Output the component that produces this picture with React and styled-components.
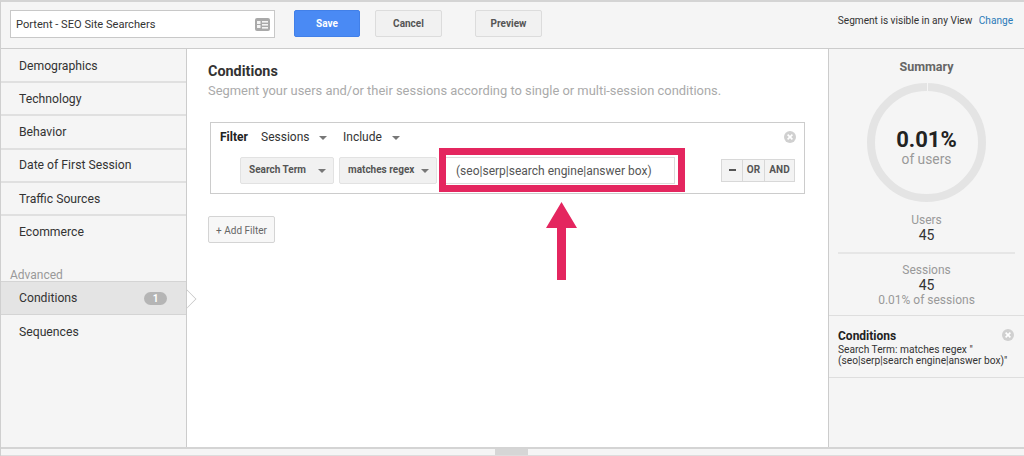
import React from "react";
import styled, { createGlobalStyle } from "styled-components";

const menuItems = ["Demographics", "Technology", "Behavior", "Date of First Session", "Traffic Sources", "Ecommerce"];

function Caret() {
  return <CaretMark />;
}

function CloseIcon() {
  return (
    <svg width="14" height="14" viewBox="0 0 14 14">
      <circle cx="7" cy="7" r="6" fill="#d0d0d0" />
      <path d="M4.6 4.6l4.8 4.8M9.4 4.6l-4.8 4.8" stroke="#fff" strokeWidth="1.6" />
    </svg>
  );
}

function CardIcon() {
  return (
    <svg width="15" height="13" viewBox="0 0 15 13">
      <rect x="0" y="0" width="15" height="13" rx="2" fill="#a9a9a9" />
      <rect x="2" y="3" width="3.5" height="3" fill="#f4f4f4" />
      <rect x="2" y="7" width="3.5" height="3" fill="#f4f4f4" />
      <rect x="7" y="3" width="6" height="1.6" fill="#f4f4f4" />
      <rect x="7" y="6" width="6" height="1.6" fill="#f4f4f4" />
      <rect x="7" y="9" width="6" height="1.6" fill="#f4f4f4" />
    </svg>
  );
}

export default function App() {
  return (
    <>
      <GlobalStyle />
      <Page>
        <TopBar>
          <NameField>
            Portent - SEO Site Searchers
            <CardIcon />
          </NameField>
          <SaveButton>Save</SaveButton>
          <ToolButton>Cancel</ToolButton>
          <ToolButton $gap={33}>Preview</ToolButton>
          <Visibility>
            Segment is visible in any View <ChangeLink>Change</ChangeLink>
          </Visibility>
        </TopBar>
        <Body>
          <Sidebar>
            {menuItems.map((item) => (
              <MenuItem key={item}>{item}</MenuItem>
            ))}
            <AdvancedLabel>Advanced</AdvancedLabel>
            <ActiveItem>
              Conditions
              <Count>1</Count>
            </ActiveItem>
            <PlainItem>Sequences</PlainItem>
          </Sidebar>
          <Main>
            <Title>Conditions</Title>
            <Subtitle>Segment your users and/or their sessions according to single or multi-session conditions.</Subtitle>
            <FilterBox>
              <FilterHead>
                <FilterLabel>Filter</FilterLabel>
                <HeadSelect $width={82}>
                  Sessions
                  <Caret />
                </HeadSelect>
                <HeadSelect>
                  Include
                  <Caret />
                </HeadSelect>
                <RemoveFilter>
                  <CloseIcon />
                </RemoveFilter>
              </FilterHead>
              <FilterRow>
                <FieldSelect $width={94}>
                  Search Term
                  <Caret />
                </FieldSelect>
                <FieldSelect $width={98}>
                  matches regex
                  <Caret />
                </FieldSelect>
                <ValueInput>(seo|serp|search engine|answer box)</ValueInput>
                <ButtonGroup>
                  <GroupButton $width={22}>
                    <MinusMark />
                  </GroupButton>
                  <GroupButton $width={22}>OR</GroupButton>
                  <GroupButton $width={30}>AND</GroupButton>
                </ButtonGroup>
              </FilterRow>
              <Highlight />
            </FilterBox>
            <AddFilter>+ Add Filter</AddFilter>
            <Arrow width="31" height="78" viewBox="0 0 31 78">
              <path d="M15.5 0L31 26H20V78H11V26H0z" fill="#e4265f" />
            </Arrow>
          </Main>
          <Summary>
            <SummaryTitle>Summary</SummaryTitle>
            <Ring>
              <RingValue>0.01%</RingValue>
              <RingLabel>of users</RingLabel>
              <RingTick />
            </Ring>
            <Stat $pad={11}>
              <StatLabel>Users</StatLabel>
              <StatValue>45</StatValue>
            </Stat>
            <StatDivider />
            <Stat $pad={9}>
              <StatLabel>Sessions</StatLabel>
              <StatValue>45</StatValue>
              <StatLabel>0.01% of sessions</StatLabel>
            </Stat>
            <ConditionCard>
              <ConditionClose>
                <CloseIcon />
              </ConditionClose>
              <ConditionTitle>Conditions</ConditionTitle>
              <ConditionText>
                Search Term: matches regex "
                <br />
                (seo|serp|search engine|answer box)"
              </ConditionText>
            </ConditionCard>
          </Summary>
        </Body>
        <BottomBar>
          <Handle />
        </BottomBar>
      </Page>
    </>
  );
}

const GlobalStyle = createGlobalStyle`
  html, body {
    margin: 0;
    padding: 0;
    background: #fff;
  }
  * {
    box-sizing: border-box;
  }
`;

const Page = styled.div`
  width: 1024px;
  height: 456px;
  overflow: hidden;
  display: flex;
  flex-direction: column;
  font-family: Roboto, "Liberation Sans", sans-serif;
  color: #333;
  border-left: 1px solid #cfcfcf;
  border-top: 2px solid #d4d4d4;
`;

const TopBar = styled.div`
  height: 47px;
  flex: none;
  display: flex;
  align-items: flex-start;
  padding: 8px 0 0 9px;
  background: #f5f5f5;
  border-bottom: 1px solid #cccccc;
`;

const NameField = styled.div`
  width: 265px;
  height: 28px;
  display: flex;
  align-items: center;
  justify-content: space-between;
  padding: 1px 4px 0 5px;
  font-size: 11.1px;
  color: #333;
  background: #fff;
  border: 1px solid #c8c8c8;
`;

const ToolButton = styled.div`
  width: 67px;
  height: 27px;
  margin-left: ${({ $gap }) => $gap || 14}px;
  display: flex;
  align-items: center;
  justify-content: center;
  font-size: 10px;
  font-weight: 700;
  color: #555;
  background: #f1f1f1;
  border: 1px solid #dcdcdc;
  border-radius: 2px;
`;

const SaveButton = styled(ToolButton)`
  width: 66px;
  margin-left: 19px;
  margin-right: 1px;
  color: #fff;
  background: #4a8af4;
  border-color: #4280e8;
`;

const Visibility = styled.div`
  margin-left: auto;
  padding: 5px 11px 0 0;
  font-size: 10.1px;
  color: #333;
`;

const ChangeLink = styled.span`
  margin-left: 4px;
  color: #2a7ab8;
`;

const Body = styled.div`
  flex: 1;
  min-height: 0;
  display: flex;
`;

const Sidebar = styled.div`
  width: 186px;
  flex: none;
  background: #f5f5f5;
  border-right: 1px solid #cccccc;
`;

const MenuItem = styled.div`
  height: 33.3px;
  display: flex;
  align-items: center;
  padding-left: 18px;
  font-size: 12.2px;
  color: #333;
  border-bottom: 2px solid #e0e0e0;
  &:nth-child(1) {
    height: 34px;
    padding-top: 1px;
  }
  &:nth-child(6) {
    padding-bottom: 2px;
    border-bottom: none;
  }
`;

const AdvancedLabel = styled.div`
  margin-top: 18px;
  height: 14px;
  padding-left: 9px;
  font-size: 12px;
  line-height: 16px;
  color: #999;
`;

const ActiveItem = styled.div`
  position: relative;
  z-index: 2;
  height: 34px;
  display: flex;
  align-items: center;
  justify-content: space-between;
  padding: 0 19px 0 18px;
  font-size: 12.2px;
  color: #333;
  background: #e4e4e4;
  border-top: 1px solid #d4d4d4;
  border-bottom: 1px solid #d4d4d4;
  &::after {
    content: "";
    position: absolute;
    top: 9.5px;
    right: -7.5px;
    width: 13px;
    height: 13px;
    background: #fff;
    border-top: 1px solid #cccccc;
    border-right: 1px solid #cccccc;
    clip-path: polygon(0 0, 100% 0, 100% 100%);
    transform: rotate(45deg);
  }
`;

const Count = styled.span`
  width: 23px;
  height: 13px;
  display: flex;
  align-items: center;
  justify-content: center;
  font-size: 10px;
  font-weight: 700;
  color: #fff;
  background: #b5b5b5;
  border-radius: 7px;
`;

const PlainItem = styled(MenuItem)`
  height: 33px;
  border-bottom: none;
`;

const Main = styled.div`
  position: relative;
  flex: 1;
  padding: 14px 0 0 21px;
  background: #fff;
`;

const Title = styled.div`
  font-size: 14.4px;
  font-weight: 700;
  line-height: 17px;
  color: #333;
`;

const Subtitle = styled.div`
  margin-top: 3px;
  font-size: 12.92px;
  line-height: 16px;
  color: #aaa;
  white-space: nowrap;
`;

const FilterBox = styled.div`
  position: relative;
  width: 595px;
  height: 72px;
  margin: 23px 0 0 2px;
  padding: 0 0 0 9px;
  border: 1px solid #cccccc;
`;

const FilterHead = styled.div`
  height: 28px;
  display: flex;
  align-items: center;
`;

const FilterLabel = styled.span`
  width: 41px;
  font-size: 12px;
  font-weight: 700;
  color: #222;
`;

const HeadSelect = styled.span`
  width: ${({ $width }) => ($width ? `${$width}px` : "auto")};
  display: flex;
  align-items: center;
  gap: 10px;
  font-size: 12px;
  color: #333;
`;

const CaretMark = styled.i`
  width: 0;
  height: 0;
  margin-top: 2px;
  border-left: 4px solid transparent;
  border-right: 4px solid transparent;
  border-top: 4px solid #777;
`;

const RemoveFilter = styled.span`
  display: flex;
  margin-left: auto;
  margin-right: 7px;
`;

const FilterRow = styled.div`
  display: flex;
  align-items: center;
  margin-top: 6px;
  padding-left: 20px;
`;

const FieldSelect = styled.div`
  width: ${({ $width }) => $width}px;
  height: 27px;
  margin-right: 5px;
  flex: none;
  display: flex;
  align-items: center;
  justify-content: space-between;
  padding: 0 7px 2px 8px;
  font-size: 10px;
  font-weight: 700;
  color: #555;
  background: #f1f1f1;
  border: 1px solid #e2e2e2;
  border-radius: 2px;
`;

const ValueInput = styled.div`
  width: 230px;
  height: 27px;
  margin-left: 3px;
  flex: none;
  display: flex;
  align-items: center;
  padding-left: 10px;
  font-size: 12px;
  color: #555;
  background: #fff;
  border: 1px solid #dcdcdc;
`;

const ButtonGroup = styled.div`
  display: flex;
  margin-left: 46px;
`;

const GroupButton = styled.div`
  width: ${({ $width }) => $width}px;
  height: 23px;
  display: flex;
  align-items: center;
  justify-content: center;
  padding-bottom: 2px;
  font-size: 10px;
  font-weight: 700;
  color: #555;
  background: #f3f3f3;
  border: 1px solid #d8d8d8;
  border-left-width: 0;
  &:first-child {
    border-left-width: 1px;
  }
`;

const MinusMark = styled.i`
  width: 7px;
  height: 2px;
  background: #555;
`;

const Highlight = styled.div`
  position: absolute;
  left: 228px;
  top: 25px;
  width: 246px;
  height: 44px;
  border: 7px solid #e4265f;
  pointer-events: none;
`;

const AddFilter = styled.div`
  width: 67px;
  height: 27px;
  margin-top: 22px;
  padding-top: 1px;
  display: flex;
  align-items: center;
  justify-content: center;
  font-size: 10px;
  color: #666;
  background: #f7f7f7;
  border: 1px solid #d4d4d4;
  border-radius: 2px;
`;

const Arrow = styled.svg`
  position: absolute;
  left: 359px;
  top: 153px;
`;

const Summary = styled.div`
  width: 196px;
  flex: none;
  background: #f5f5f5;
  border-left: 1px solid #cccccc;
  text-align: center;
`;

const SummaryTitle = styled.div`
  padding-top: 10px;
  font-size: 12.5px;
  font-weight: 700;
  line-height: 15px;
  color: #666;
`;

const Ring = styled.div`
  position: relative;
  width: 119px;
  height: 119px;
  margin: 9px auto 0;
  padding-top: 9px;
  display: flex;
  flex-direction: column;
  align-items: center;
  justify-content: center;
  border: 8px solid #e4e4e4;
  border-radius: 50%;
`;

const RingTick = styled.i`
  position: absolute;
  top: -8px;
  left: 50%;
  width: 1px;
  height: 8px;
  background: #f5f5f5;
`;

const RingValue = styled.div`
  font-size: 22px;
  font-weight: 700;
  line-height: 24px;
  color: #222;
`;

const RingLabel = styled.div`
  font-size: 13.8px;
  line-height: 15px;
  color: #999;
`;

const Stat = styled.div`
  padding-top: ${({ $pad }) => $pad}px;
`;

const StatLabel = styled.div`
  font-size: 12px;
  line-height: 15px;
  color: #999;
`;

const StatValue = styled.div`
  font-size: 14px;
  line-height: 15px;
  color: #333;
`;

const StatDivider = styled.div`
  height: 2px;
  margin: 9px 9px 0 9px;
  background: #e6e6e6;
`;

const ConditionCard = styled.div`
  position: relative;
  height: 63px;
  margin-top: 7px;
  padding: 14px 0 0 9px;
  text-align: left;
  border-top: 1px solid #dedede;
  border-bottom: 1px solid #dedede;
`;

const ConditionClose = styled.span`
  position: absolute;
  top: 12px;
  right: 9px;
  display: flex;
`;

const ConditionTitle = styled.div`
  font-size: 12px;
  font-weight: 700;
  line-height: 13px;
  color: #222;
`;

const ConditionText = styled.div`
  margin-top: 1px;
  font-size: 10.2px;
  line-height: 11px;
  color: #333;
  white-space: nowrap;
`;

const BottomBar = styled.div`
  height: 9px;
  flex: none;
  display: flex;
  justify-content: center;
  background: #f5f5f5;
  border-top: 2px solid #d4d4d4;
  border-bottom: 1px solid #dddddd;
  padding-right: 2px;
`;

const Handle = styled.div`
  width: 33px;
  height: 6px;
  background: #d6d6d6;
`;
